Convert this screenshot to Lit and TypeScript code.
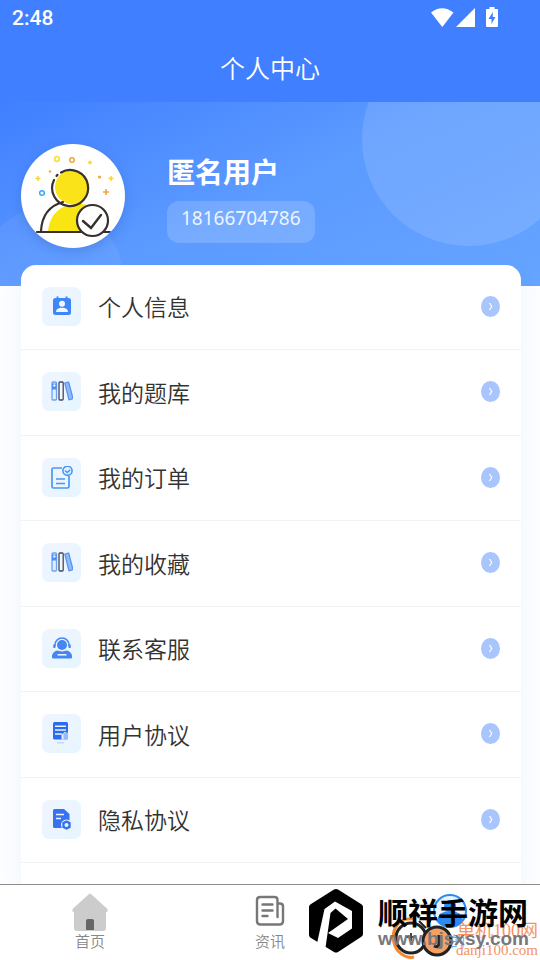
import { LitElement, html, css, svg, TemplateResult } from "lit";
import { customElement } from "lit/decorators.js";

const books = svg`
  <rect x="1" y="2" width="4.500" height="18" rx="1" fill="#e2eeff" stroke="#6aa2f5" stroke-width="1.300"/>
  <path d="M1 3.500h4.500v6H1z" fill="#4d8df5"/>
  <circle cx="3.300" cy="5.500" r="1.200" fill="#e6f1ff"/>
  <rect x="8" y="2" width="4.200" height="18" rx="1" fill="#f2f7ff" stroke="#46485a" stroke-width="1.300"/>
  <path d="M13.800 3.200 17.600 2l4.400 16.500-4 1.300z" fill="#8fbafb" stroke="#5b93ef" stroke-width="1.300" stroke-linejoin="round"/>`;

const icons: Record<string, TemplateResult> = {
  profile: svg`
    <path d="M4.500 3h1V1.500h2V3h7V1.500h2V3h1A2.500 2.500 0 0 1 20 5.500v12a2.500 2.500 0 0 1-2.500 2.500h-13A2.500 2.500 0 0 1 2 17.500v-12A2.500 2.500 0 0 1 4.500 3z" fill="#3f86f8"/>
    <circle cx="11" cy="8.800" r="3" fill="#f0f7ff"/>
    <path d="M5 17c0-3 3-4.200 6-4.200s6 1.200 6 4.200z" fill="#f0f7ff"/>`,
  books,
  order: svg`
    <path d="M11 2H2.500Q1 2 1 3.500v17Q1 22 2.500 22h14q1.500 0 1.500-1.500V10" fill="none" stroke="#4a97f3" stroke-width="1.700"/>
    <path d="M5 13h9M5 17.500h9" stroke="#4a97f3" stroke-width="1.700"/>
    <circle cx="16.500" cy="4.800" r="4.600" fill="#e4f1ff" stroke="#4a97f3" stroke-width="1.600"/>
    <path d="m14 4.500 2.200 2 3-2.600" fill="none" stroke="#4a97f3" stroke-width="1.500"/>`,
  service: svg`
    <circle cx="11" cy="8" r="5" fill="#4586f3"/>
    <path d="M4 9.500V8a7 7 0 0 1 14 0v1.500" fill="none" stroke="#4586f3" stroke-width="1.600"/>
    <path d="M3.300 7.500v3.500M18.700 7.500v3.500" stroke="#4586f3" stroke-width="2"/>
    <path d="M1 20.500v-2q1-4 5-5l5 1 5-1q4 1 5 5v2q0 1-1 1H2q-1 0-1-1z" fill="#4586f3"/>
    <path d="M6.500 17.800h9" stroke="#e7f2ff" stroke-width="1.600"/>`,
  terms: svg`
    <rect x="2" y="0" width="15" height="17.500" rx="1.500" fill="#2c6cf2"/>
    <path d="M4 4.200h11M4 8h11M4 12h7" stroke="#eaf3ff" stroke-width="1.500"/>
    <path d="M10.500 17.500V13l3-3 3.500 1v6.500z" fill="#e1edff"/>
    <rect x="12.500" y="11" width="4.500" height="6.500" rx="1" fill="#97bbfa"/>
    <path d="M6 20.800h7" stroke="#a8cafb" stroke-width="1"/>`,
  privacy: svg`
    <path d="M3.500 1H13l5.500 5V20H3.500Q2 20 2 18.500v-16Q2 1 3.500 1z" fill="#3972ee"/>
    <path d="M5 6.500h8M5 10.500h5" stroke="#eaf3ff" stroke-width="1.600"/>
    <circle cx="15.500" cy="17" r="5.500" fill="#edf6ff"/>
    <path d="m15.500 12.300 4.200 2v5.400l-4.200 2-4.200-2v-5.400z" fill="#3972ee"/>
    <circle cx="15.500" cy="17" r="2" fill="#edf6ff"/>`,
};

const rows = [
  { icon: "profile", label: "个人信息" },
  { icon: "books", label: "我的题库" },
  { icon: "order", label: "我的订单" },
  { icon: "books", label: "我的收藏" },
  { icon: "service", label: "联系客服" },
  { icon: "terms", label: "用户协议" },
  { icon: "privacy", label: "隐私协议" },
];

@customElement("app-root")
export class AppRoot extends LitElement {
  static styles = css`
    :host {
      display: flex;
      flex-direction: column;
      height: 100vh;
      overflow: hidden;
      position: relative;
      background: #fcfdff;
      color: #333;
      font-family: "Noto Sans", "Noto Sans CJK SC", sans-serif;
    }
    * { box-sizing: border-box; }
    svg { display: block; flex: none; }
    h1, h2, p, ul { margin: 0; padding: 0; }

    .top { flex: none; background: #407fff; color: #fff; }
    .status {
      display: flex;
      align-items: center;
      justify-content: space-between;
      height: 36px;
      padding: 0 40px 0 12px;
      font: 500 21px/38px Roboto, sans-serif;
    }
    .title {
      height: 66px;
      text-align: center;
      font-family: "Noto Sans CJK SC", sans-serif;
      font-size: 25px;
      line-height: 62px;
      font-weight: 350;
    }

    .content { flex: 1; min-height: 0; display: flex; flex-direction: column; overflow: hidden; }
    .hero {
      flex: none;
      position: relative;
      display: flex;
      gap: 42px;
      height: 184px;
      padding: 42px 21px 0;
      overflow: hidden;
      color: #fff;
      background: linear-gradient(155deg, #407fff 0%, #5c9bff 50%, #65a4ff 100%);
    }
    .bubble { position: absolute; border-radius: 50%; background: rgba(255, 255, 255, 0.12); }
    .bubble.big { width: 214px; height: 214px; right: -36px; top: -70px; }
    .bubble.small { width: 144px; height: 144px; left: -21px; top: 104px; background: rgba(255, 255, 255, 0.06); }
    .avatar {
      position: relative;
      width: 104px;
      height: 104px;
      border-radius: 50%;
      background: #fff;
      box-shadow: 0 4px 12px rgba(40, 90, 190, 0.3);
    }
    .who { position: relative; display: flex; flex-direction: column; align-items: flex-start; gap: 10px; padding-top: 7px; }
    .name { font-family: "Noto Sans CJK SC", sans-serif; font-size: 28px; line-height: 40px; font-weight: 700; }
    .phone {
      height: 42px;
      padding: 0 14px;
      border-radius: 12px;
      background: rgba(255, 255, 255, 0.16);
      font-size: 19px;
      line-height: 34px;
      color: #eef5ff;
    }

    .card {
      flex: 1 0 auto;
      position: relative;
      margin: -21px 19px 0 21px;
      border-radius: 15px 15px 0 0;
      background: #fff;
      box-shadow: 0 8px 20px rgba(64, 127, 255, 0.07);
      list-style: none;
    }
    .item { height: 85px; border-bottom: 1px solid #f2f3f5; }
    .item:nth-child(even) { height: 86px; }
    .link {
      display: flex;
      align-items: center;
      gap: 17px;
      height: 100%;
      padding: 0 21px 2px;
      color: #333;
      text-decoration: none;
      font-family: "Noto Sans CJK SC", sans-serif;
      font-size: 23px;
      line-height: 34px;
      font-weight: 350;
    }
    .tile {
      display: grid;
      place-items: center;
      width: 39px;
      height: 39px;
      border-radius: 7px;
      background: linear-gradient(135deg, #f0f5ff, #e6f5ff);
    }
    .label { flex: 1; }

    .tabs {
      flex: none;
      display: flex;
      height: 76px;
      border-top: 1px solid #8c8c8c;
      background: #fff;
    }
    .tab {
      flex: 1;
      display: flex;
      flex-direction: column;
      align-items: center;
      padding: 8px 0 0;
      border: 0;
      background: none;
      color: #888;
      font: 350 15px/20px "Noto Sans CJK SC", sans-serif;
    }
    .tab.on { color: #6fa8f8; }

    .mark { position: absolute; right: 15px; bottom: 6px; display: flex; align-items: center; gap: 14px; }
    .brand { font: 700 30px/36px "Noto Sans CJK SC", sans-serif; color: #000; white-space: nowrap; }
    .site { font: 700 19px/20px "Liberation Sans", sans-serif; color: #77777c; }
    .mark-text { display: flex; flex-direction: column; width: 147px; }
    .rings { position: absolute; right: 86px; bottom: 0; }
    .second {
      position: absolute;
      right: 2px;
      bottom: 2px;
      color: #f5925f;
      font: 400 15px/16px "Liberation Serif", serif;
      text-align: right;
    }
    .second-name { font: 400 18px/22px "Liberation Serif", "Noto Sans CJK SC", serif; }
  `;

  render() {
    return html`
      <header class="top">
        <div class="status">
          <span>2:48</span>
          <svg width="70" height="22" viewBox="0 0 70 22" fill="#fff">
            <path d="M1 5.500Q12 -3 23.500 5.500L12.300 20z"/>
            <path d="M45 1v19H26z"/>
            <path d="M59.500 0h5v2H67q1 0 1 1v16q0 1-1 1H57q-1 0-1-1V3q0-1 1-1h2.500z"/>
            <path d="M62.800 5 58.500 12H61.500v5l4-7H62.800z" fill="#407fff"/>
          </svg>
        </div>
        <h1 class="title">个人中心</h1>
      </header>
      <main class="content">
        <section class="hero">
          <span class="bubble big"></span>
          <span class="bubble small"></span>
          <svg class="avatar" viewBox="0 0 104 104" fill="none">
            <path d="M27 87C29 68 42 60 57 60s25 6 27 27z" fill="#f9e512"/>
            <circle cx="51" cy="43" r="17" fill="#fae318"/>
            <path d="M62 29a18 18 0 0 1-8 31c12 0 21-20 8-31z" fill="#fbb429"/>
            <path d="M40 28.500A18 18 0 1 1 33 36M35.500 32l1-1.200" stroke="#38302f" stroke-width="2.200" stroke-linecap="round"/>
            <path d="M16 88h73M20 87c1-18 11-26 22-29" stroke="#38302f" stroke-width="2.200" stroke-linecap="round"/>
            <circle cx="71.500" cy="76.500" r="15.500" fill="#fff" stroke="#38302f" stroke-width="2.200"/>
            <path d="m62 77 8 7 10-13" stroke="#38302f" stroke-width="2.400" stroke-linecap="round"/>
            <circle cx="21" cy="49" r="2.300" stroke="#37aaf0" stroke-width="1.500"/>
            <circle cx="51" cy="16" r="2.300" stroke="#f3a63b" stroke-width="1.500"/>
            <circle cx="36" cy="15" r="2.300" stroke="#f4e342" stroke-width="1.800"/>
            <circle cx="78.500" cy="33" r="1.600" fill="#f3a63b"/>
            <circle cx="29" cy="27.500" r="1.200" fill="#f3a63b"/>
            <path d="M85 45v6M82 48h6" stroke="#f3a63b" stroke-width="1.600"/>
            <path d="M17 32v5M14.500 34.500h5M90 32v5M87.500 34.500h5M69 16.500v4M67 18.500h4" stroke="#f4d43a" stroke-width="1.400"/>
          </svg>
          <div class="who">
            <h2 class="name">匿名用户</h2>
            <p class="phone">18166704786</p>
          </div>
        </section>
        <ul class="card">
          ${rows.map(
            (row) => html`<li class="item">
              <a class="link" href="#">
                <span class="tile"><svg width="22" height="23" viewBox="0 0 22 23">${icons[row.icon]}</svg></span>
                <span class="label">${row.label}</span>
                <svg width="19" height="21" viewBox="0 0 19 21">
                  <ellipse cx="9.500" cy="10.500" rx="9.500" ry="10.500" fill="#a8c5fd"/>
                  <path d="m8.500 7 2.300 3.500-2.300 3.500" fill="none" stroke="#fff" stroke-width="1.200"/>
                </svg>
              </a>
            </li>`
          )}
        </ul>
      </main>
      <nav class="tabs">
        <button class="tab">
          <svg width="38" height="38" viewBox="0 0 38 38">
            <path d="M19 1.500 35.500 16.500V18H34v17q0 2-2 2H6q-2 0-2-2V18H2.500v-1.500z" fill="#ccc" stroke="#ccc" stroke-width="2" stroke-linejoin="round"/>
            <path d="M15 37V28q0-2 2-2h4q2 0 2 2v9z" fill="#666"/>
          </svg>
          首页
        </button>
        <button class="tab">
          <svg width="38" height="38" viewBox="0 0 38 38" fill="none" stroke="#777" stroke-width="2.400" stroke-linecap="round">
            <path d="M26.500 24V7q0-3-3-3h-14Q6 4 6 7v21q0 3.500 3.500 3.500h19q3.500 0 3.500-3.500V13.500q0-3-3-3h-2.500V24"/>
            <path d="M11.500 11.500h10M11.500 17.500h10M11.500 23h5"/>
          </svg>
          资讯
        </button>
        <button class="tab on">
          <svg width="38" height="38" viewBox="0 0 38 38">
            <circle cx="19" cy="18" r="16" fill="#e8f3ff" stroke="#2c8af5" stroke-width="2"/>
            <circle cx="19" cy="13" r="6" fill="#2c8af5"/>
            <path d="M6 27q2-9 13-9t13 9q-5 7-13 7T6 27z" fill="#2c8af5"/>
          </svg>
          我的
        </button>
      </nav>
      <svg class="rings" width="64" height="44" viewBox="0 0 64 44" fill="none">
        <path d="M24 3C6 0-3 20 8 35q8 8 16 6" stroke="#f5872d" stroke-width="3"/>
        <circle cx="21" cy="22" r="15" fill="#fff" stroke="#222" stroke-width="3"/>
        <path d="M17 21h8M21 17v8" stroke="#444" stroke-width="2"/>
        <path d="M36 12l-7-7M38 9l3-6" stroke="#222" stroke-width="2"/>
        <circle cx="47" cy="25" r="14" fill="#f6a164" stroke="#222" stroke-width="3"/>
        <path d="M49 19v9q-1 4-5 2" stroke="#222" stroke-width="3"/>
      </svg>
      <div class="second">
        <div class="second-name">单机100网</div>
        <div>danji100.com</div>
      </div>
      <div class="mark">
        <svg width="56" height="66" viewBox="0 0 56 66">
          <path d="M26 1.500q2-1 4 0L53 16q2 1 2 3v27q0 2-2 3L30 64q-2 1-4 0L3 50q-2-1-2-3V19q0-2 2-3z" fill="#000"/>
          <path d="M27 13.500 16.500 21 8 60l9 3 5.500-38 5-4.500L40 31 20 45l10 5 14-9.500V23z" fill="#fff"/>
        </svg>
        <div class="mark-text">
          <span class="brand">顺祥手游网</span>
          <span class="site">www.bjsxsy.com</span>
        </div>
      </div>
    `;
  }
}
